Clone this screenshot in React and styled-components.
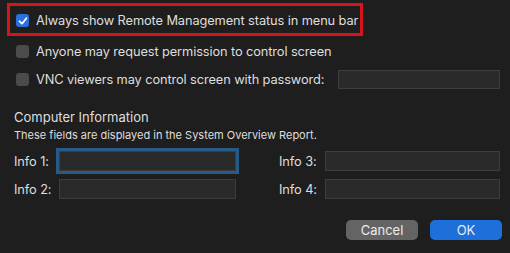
import React from "react";
import styled, { createGlobalStyle } from "styled-components";

const GlobalStyle = createGlobalStyle`
  html, body {
    margin: 0;
    padding: 0;
    background: #1e1e1e;
  }
  body {
    font-family: Inter, "Liberation Sans", sans-serif;
    color: #dedede;
  }
`;

const Sheet = styled.div`
  width: 510px;
  height: 253px;
  box-sizing: border-box;
  padding: 3px 10px 0 7px;
  background: #1e1e1e;
  display: flex;
  flex-direction: column;
`;

const Options = styled.div`
  display: flex;
  flex-direction: column;
  gap: 2px;
`;

const Highlight = styled.div`
  display: flex;
  align-items: center;
  gap: 7px;
  width: 356px;
  height: 33px;
  box-sizing: border-box;
  border: 3px solid #d3151c;
  padding: 2px 6px 0;
`;

const Option = styled.div`
  display: flex;
  align-items: center;
  gap: 7px;
  height: 26px;
  padding-left: 9px;
`;

const Box = styled.span`
  width: 13px;
  height: 13px;
  border-radius: 3px;
  flex: none;
  display: flex;
  align-items: center;
  justify-content: center;
  background: ${(p) => (p.checked ? "#2a6fdc" : "#4b4b4b")};
`;

const Label = styled.span`
  font-size: 12.8px;
  letter-spacing: -0.1px;
  white-space: nowrap;
`;

const Field = styled.span`
  display: block;
  box-sizing: border-box;
  width: ${(p) => p.w}px;
  height: ${(p) => p.h || 20}px;
  background: #2a2a2a;
  border: 1px solid #3d3d3d;
  box-shadow: ${(p) => (p.focused ? "0 0 0 3px #285a88" : "none")};
`;

const PasswordField = styled(Field)`
  margin-left: auto;
`;

const Section = styled.div`
  padding-left: 7px;
  margin-top: 17px;
`;

const Title = styled.div`
  font-size: 13px;
  line-height: 16px;
`;

const Note = styled.div`
  font-size: 11px;
  line-height: 14px;
  margin-top: 3px;
`;

const Columns = styled.div`
  display: flex;
  gap: 43px;
  margin-top: 9px;
`;

const FieldColumn = styled.div`
  display: grid;
  grid-template-columns: ${(p) => p.label}px ${(p) => p.input}px;
  row-gap: 8px;
  align-items: center;
`;

const Footer = styled.div`
  display: flex;
  justify-content: flex-end;
  gap: 12px;
  margin-top: auto;
  margin-right: -2px;
  margin-bottom: 13px;
`;

const Button = styled.button`
  width: 72px;
  height: 20px;
  border: none;
  border-radius: 5px;
  font-family: inherit;
  font-size: 13px;
  color: #ececec;
  padding: 0;
  background: ${(p) => (p.primary ? "#1d6fda" : "#646464")};
`;

const Check = () => (
  <svg width="10" height="10" viewBox="0 0 10 10">
    <path d="M1.6 5.3 L4 7.7 L8.4 2.2" fill="none" stroke="#fff" strokeWidth="1.8" strokeLinecap="round" strokeLinejoin="round" />
  </svg>
);

export default function App() {
  return (
    <Sheet>
      <GlobalStyle />
      <Options>
        <Highlight>
          <Box checked>
            <Check />
          </Box>
          <Label>Always show Remote Management status in menu bar</Label>
        </Highlight>
        <Option>
          <Box />
          <Label>Anyone may request permission to control screen</Label>
        </Option>
        <Option>
          <Box />
          <Label>VNC viewers may control screen with password:</Label>
          <PasswordField w={162} h={19} />
        </Option>
      </Options>
      <Section>
        <Title>Computer Information</Title>
        <Note>These fields are displayed in the System Overview Report.</Note>
        <Columns>
          <FieldColumn label={45} input={177}>
            <Label>Info 1:</Label>
            <Field w={177} focused />
            <Label>Info 2:</Label>
            <Field w={177} />
          </FieldColumn>
          <FieldColumn label={46} input={175}>
            <Label>Info 3:</Label>
            <Field w={175} />
            <Label>Info 4:</Label>
            <Field w={175} />
          </FieldColumn>
        </Columns>
      </Section>
      <Footer>
        <Button>Cancel</Button>
        <Button primary>OK</Button>
      </Footer>
    </Sheet>
  );
}
